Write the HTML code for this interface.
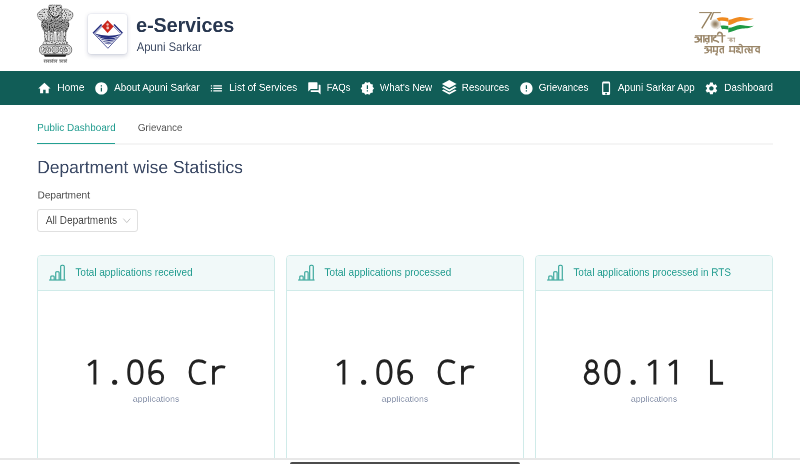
<!DOCTYPE html>
<html>
<head>
<meta charset="utf-8">
<style>
*{box-sizing:border-box;margin:0;padding:0}
html,body{width:800px;height:464px;overflow:hidden;background:#fff}
body{font-family:"Liberation Sans",sans-serif;position:relative;color:#333}
.t{position:absolute;left:0;top:0;white-space:nowrap;line-height:1.2;transform-origin:0 0;z-index:5;will-change:transform}
#title{font-size:40px;font-weight:bold;color:#283750;transform:translate(136.12px,12.79px) scale(0.4900,0.5107)}
#sub{font-size:24px;font-weight:normal;color:#3d4a63;transform:translate(136.78px,39.87px) scale(0.4679,0.5059)}
#n1{font-size:20px;font-weight:normal;color:#fff;transform:translate(57.21px,81.15px) scale(0.5102,0.5107)}
#n2{font-size:20px;font-weight:normal;color:#fff;transform:translate(114.12px,81.15px) scale(0.4962,0.5107)}
#n3{font-size:20px;font-weight:normal;color:#fff;transform:translate(229.18px,81.15px) scale(0.5016,0.5107)}
#n4{font-size:20px;font-weight:normal;color:#fff;transform:translate(326.72px,81.15px) scale(0.4728,0.5107)}
#n5{font-size:20px;font-weight:normal;color:#fff;transform:translate(379.87px,81.15px) scale(0.4925,0.5107)}
#n6{font-size:20px;font-weight:normal;color:#fff;transform:translate(461.68px,81.15px) scale(0.4970,0.5107)}
#n7{font-size:20px;font-weight:normal;color:#fff;transform:translate(538.73px,81.15px) scale(0.4904,0.5107)}
#n8{font-size:20px;font-weight:normal;color:#fff;transform:translate(617.87px,81.15px) scale(0.4936,0.5107)}
#n9{font-size:20px;font-weight:normal;color:#fff;transform:translate(724.18px,81.15px) scale(0.4979,0.5107)}
#tab1{font-size:20px;font-weight:normal;color:#239d90;transform:translate(37.18px,121.43px) scale(0.4971,0.5036)}
#tab2{font-size:20px;font-weight:normal;color:#555;transform:translate(137.88px,121.43px) scale(0.4882,0.5036)}
#h1{font-size:36px;font-weight:normal;color:#3b4965;transform:translate(37.15px,156.95px) scale(0.4849,0.4808)}
#lbl{font-size:20px;font-weight:normal;color:#4a4a4a;transform:translate(37.58px,189.00px) scale(0.5006,0.5000)}
#seltxt{font-size:22px;font-weight:normal;color:#4a4a4a;transform:translate(45.88px,213.53px) scale(0.4550,0.5133)}
#ct1{font-size:21px;font-weight:normal;color:#239d90;transform:translate(75.37px,265.16px) scale(0.4756,0.5321)}
#ct2{font-size:21px;font-weight:normal;color:#239d90;transform:translate(324.37px,265.16px) scale(0.4808,0.5321)}
#ct3{font-size:21px;font-weight:normal;color:#239d90;transform:translate(573.37px,265.16px) scale(0.4726,0.5321)}
#sm1{font-size:17px;font-weight:normal;color:#8c96ad;transform:translate(132.70px,394.44px) scale(0.5202,0.4849)}
#sm2{font-size:17px;font-weight:normal;color:#8c96ad;transform:translate(381.50px,394.44px) scale(0.5219,0.4849)}
#sm3{font-size:17px;font-weight:normal;color:#8c96ad;transform:translate(630.81px,394.44px) scale(0.5173,0.4849)}
#logobox{position:absolute;left:87.9px;top:14.3px;width:39.4px;height:39.9px;background:#fff;border-radius:3px;box-shadow:0 1.5px 4px rgba(60,70,110,.22),0 0 0 0.6px rgba(80,95,150,.09)}
#nav{position:absolute;left:0;top:70.5px;width:800px;height:34px;background:#115d57}
.nic{position:absolute;top:80.6px;width:14.8px;height:14.8px;fill:#fff;z-index:4}
#tabline{position:absolute;left:37px;top:143.1px;width:735.8px;height:1.7px;background:#f5f5f5}
#tabink{position:absolute;left:37px;top:142.8px;width:78px;height:1.6px;background:#23a092}
#sel{position:absolute;left:37.2px;top:208.9px;width:101.3px;height:23px;border:1px solid #e0e0e0;border-radius:3px;background:#fff}
.card{position:absolute;top:255px;width:238px;height:230px;border:1px solid #d0ebe9;border-radius:4px;background:#fff;overflow:hidden}
.chead{position:absolute;left:0;top:0;width:100%;height:35px;background:#f1f9f9;border-bottom:1px solid #d0ebe9}
.cicon{position:absolute;top:262.7px;width:18.7px;height:18.7px;z-index:4}
.big{position:absolute;top:353.5px;width:238px;margin-left:0.7px;text-align:center;font-family:"Liberation Mono",monospace;font-size:34.5px;line-height:44px;color:#222;white-space:pre;transform:scaleY(1.124);transform-origin:50% 31px;z-index:5}
#sbline{position:absolute;left:0;top:458px;width:800px;height:2px;background:#e8e8e8;z-index:8}
#sbwhite{position:absolute;left:0;top:460px;width:800px;height:4px;background:#fff;z-index:8}
#sbthumb{position:absolute;left:290px;top:461.9px;width:229.5px;height:4px;background:#4c4c4c;border-radius:2px 2px 0 0;z-index:9}
</style>
</head>
<body>
<svg id="emblem" style="position:absolute;left:30px;top:0;width:50px;height:70px" viewBox="30 0 50 70">
<defs>
<filter id="tx1" x="-5%" y="-5%" width="110%" height="110%" color-interpolation-filters="sRGB">
<feTurbulence type="fractalNoise" baseFrequency="0.950 0.800" numOctaves="1" seed="7" result="n"/>
<feColorMatrix in="n" type="matrix" values="0 0 0 0 0 0 0 0 0 0 0 0 0 0 0 3.500 0 0 0 -1.550" result="a"/>
<feFlood flood-color="#262626" result="f"/>
<feComposite in="f" in2="a" operator="in" result="sp"/>
<feComposite in="sp" in2="SourceGraphic" operator="in" result="s2"/>
<feMerge><feMergeNode in="SourceGraphic"/><feMergeNode in="s2"/></feMerge>
</filter>
<filter id="tx2" x="-5%" y="-5%" width="110%" height="110%" color-interpolation-filters="sRGB">
<feTurbulence type="fractalNoise" baseFrequency="0.900 0.900" numOctaves="1" seed="11" result="n"/>
<feColorMatrix in="n" type="matrix" values="0 0 0 0 0 0 0 0 0 0 0 0 0 0 0 3.500 0 0 0 -1.700" result="a"/>
<feFlood flood-color="#3a3a3a" result="f"/>
<feComposite in="f" in2="a" operator="in" result="sp"/>
<feComposite in="sp" in2="SourceGraphic" operator="in" result="s2"/>
<feMerge><feMergeNode in="SourceGraphic"/><feMergeNode in="s2"/></feMerge>
</filter>
</defs>
<!-- side lion heads -->
<g filter="url(#tx2)">
<path d="M49.200 10.200 C47 8.300 42.500 8.600 40.400 11 C37.600 12.200 36.600 15.200 38.200 17.300 C38.600 19.600 40.800 20.800 43 20.200 L49.200 22 Z" fill="#dedede" stroke="#5a5a5a" stroke-width="0.500"/>
<path d="M61.200 10.200 C63.400 8.300 67.900 8.600 70 11 C72.800 12.200 73.800 15.200 72.200 17.300 C71.800 19.600 69.600 20.800 67.400 20.200 L61.200 22 Z" fill="#dedede" stroke="#5a5a5a" stroke-width="0.500"/>
</g>
<!-- mane -->
<g filter="url(#tx1)">
<path d="M42 19.600 L68.400 19.600 L69.400 25 L67.800 29.500 L66 32.600 L62 31 L58.500 33 L55.200 31.400 L52 33 L48.500 31 L44.500 32.600 L42.600 29.500 L41 25 Z" fill="#9c9c9c"/>
</g>
<!-- center head -->
<g filter="url(#tx1)">
<path d="M49.600 5.200 L60.800 5.200 Q61.600 5.200 61.600 6.200 L61.600 16 Q61.600 20 55.200 20.400 Q48.800 20 48.800 16 L48.800 6.200 Q48.800 5.200 49.600 5.200 Z" fill="#d4d4d4" stroke="#555" stroke-width="0.500"/>
</g>
<path d="M54.300 7.600 h2.200 v0.900 h-0.600 v2 h-1 v-2 h-0.600 z" fill="#f4f4f4"/>
<path d="M51.300 14.800 Q55.300 19.600 59.400 14.800" fill="none" stroke="#1e1e1e" stroke-width="1.200"/>
<path d="M52.200 14.300 Q55.300 17.500 58.500 14.300" fill="none" stroke="#f2f2f2" stroke-width="0.900"/>
<!-- legs -->
<g fill="#e4e4e4" stroke="#4a4a4a" stroke-width="0.550" filter="url(#tx2)">
<path d="M44.600 31.500 L47.300 31 L47.600 41 L45 41 Z"/>
<path d="M50 32 L53.200 32 L52.800 41 L50.400 41 Z"/>
<path d="M57 32 L60.400 32 L60 41 L57.400 41 Z"/>
<path d="M63.200 31 L65.900 31.500 L65.500 41 L62.900 41 Z"/>
</g>
<path d="M48.600 32 L49.200 40 M54 33 L54.400 40 M56.200 33 L55.900 40 M61.600 32 L61.300 40" stroke="#666" stroke-width="0.500"/>
<!-- paws -->
<g filter="url(#tx2)"><path d="M42.800 44.800 Q43 41 46 40.800 L64.600 40.800 Q67.800 41 68 44.800 Z" fill="#e0e0e0" stroke="#555" stroke-width="0.400"/></g>
<!-- abacus -->
<rect x="39.500" y="44.800" width="32.200" height="10" rx="4.600" fill="#ededed" stroke="#3f3f3f" stroke-width="0.700"/>
<g filter="url(#tx2)"><rect x="41.200" y="46.200" width="28.800" height="7.200" rx="3.300" fill="#f0f0f0" stroke="#7a7a7a" stroke-width="0.450"/></g>
<path d="M43.600 51.600 L44 48.600 Q47 47.400 50.400 48.400 L50.600 51.600 M46 49 L46 51.600 M48.400 49 L48.400 51.600 M60.200 51.600 L60.400 48.400 Q63.600 47.400 66.800 48.600 L67.200 51.600 M62.600 49 L62.600 51.600 M64.800 49 L64.800 51.600" fill="none" stroke="#4a4a4a" stroke-width="0.700"/>
<circle cx="55.400" cy="49.500" r="3.500" fill="#f4f4f4" stroke="#444" stroke-width="0.700"/>
<circle cx="55.400" cy="49.500" r="2" fill="#cfcfcf" stroke="#666" stroke-width="0.500"/>
<circle cx="55.400" cy="49.500" r="0.700" fill="#f8f8f8" stroke="#555" stroke-width="0.300"/>
<!-- base -->
<path d="M43.800 54.600 L66.400 54.600 L65.400 56.700 L44.800 56.700 Z" fill="#222"/>
<!-- motto -->
<g stroke="#565656" fill="none" stroke-width="0.700">
<path d="M43.600 60 H57.600 M59 60 H67.200"/>
<path d="M44.800 60 V62.800 M46.600 60 V62.800 M48.600 60 V62.800 M50.300 60 V62.800 M52.400 60 V62.800 M54.200 60 V62.800 M56.400 60 V62.800 M60.200 60 V62.800 M62.200 60 V62.800 M64.300 60 V62.800 M66.200 60 V62.800" stroke-width="0.650"/>
<path d="M43.800 61.500 h1 M47.200 61.500 h1.200 M51 61.600 h1.200 M55 61.400 h1.200 M60.800 61.500 h1.200 M64.800 61.500 h1.200" stroke-width="0.650"/>
<path d="M52 59.900 L53.400 58.900 M65.800 59.900 L67 58.900" stroke-width="0.450"/>
</g>
</svg>

<div id="logobox"></div>
<svg id="uklogo" style="position:absolute;left:88px;top:14px;width:40px;height:40px;z-index:2" viewBox="88 14 40 40">
<g fill="none" stroke="#232c7d" stroke-linecap="butt">
<path d="M93 32.700 L107.900 48.300 L122.500 32.700" stroke-width="0.750"/>
<path d="M93.300 33 L101.600 24.600" stroke-width="1.400"/>
<path d="M95 33.300 L102.300 26.100" stroke-width="0.600"/>
<path d="M122.300 33 L114 24.600" stroke-width="1.400"/>
<path d="M120.500 33.300 L113.200 26.100" stroke-width="0.600"/>
</g>
<g fill="#232c7d">
<path d="M93.600 33.300 Q108 42.400 121.600 33.900 Q108 37.800 93.600 33.300 Z"/>
<path d="M95.800 35.600 Q109 43 119.400 36.400 Q109 40 95.800 35.600 Z"/>
<path d="M98 37.900 Q109.500 44 117.200 38.500 Q109.500 41.600 98 37.900 Z"/>
<path d="M100.400 40.200 Q109.500 45 115 40.600 Q109.500 43.200 100.400 40.200 Z"/>
<path d="M103 42.500 Q109 45.800 113 42.600 Q109 44.500 103 42.500 Z"/>
</g>
<path d="M107.600 20.300 L113.600 26.600 L107.600 32.900 L101.700 26.600 Z" fill="#c9261c"/>
<g fill="#f0bdb7"><circle cx="107.600" cy="24.500" r="1.200"/><circle cx="107.700" cy="28" r="1.400"/></g>
</svg>

<svg id="azadi" style="position:absolute;left:690px;top:4px;width:80px;height:58px" viewBox="690 4 80 58">
<defs>
<radialGradient id="chk" cx="0.500" cy="0.500" r="0.500"><stop offset="0" stop-color="#8d7759"/><stop offset="0.350" stop-color="#a89880"/><stop offset="0.700" stop-color="#d6cec2"/><stop offset="0.880" stop-color="#f1eeea"/><stop offset="1" stop-color="#ffffff"/></radialGradient>
</defs>
<!-- 75 -->
<g fill="none" stroke="#96815f" stroke-linecap="butt">
<path d="M699.200 12.600 H712" stroke-width="1"/>
<path d="M711.300 12.600 L701.800 28.400" stroke-width="1.400"/>
<path d="M712.800 12.600 H720.800" stroke-width="1"/>
<path d="M713.400 12.600 L710.500 19.800" stroke-width="1.300"/>
</g>
<circle cx="715.200" cy="24" r="5.400" fill="url(#chk)"/>
<path d="M716.600 18.900 A5.300 5.300 0 0 1 716.800 29.100" fill="none" stroke="#cfc8bd" stroke-width="0.700"/>
<!-- flag -->
<g fill="#f08a1f">
<path d="M716.800 18.300 C720 17 724 17 728.300 18.100 L728.300 21.700 C724 20.600 721 20.600 718.800 21.300 Z"/>
<path d="M728.300 19.600 C732 20 736 17 740 17.100 C745 17.200 749 19.400 753.800 18.200 C749 21.200 745 20.400 741 20.900 C736 21.500 732 24.600 728.300 25.300 Z"/>
</g>
<g fill="#1f9a45">
<path d="M720.400 25.800 C723 25.200 725.500 25.300 728.300 26 L728.300 29.500 C725.500 28.800 723.500 28.800 722 29.200 Z"/>
<path d="M728.300 27.800 C732 28 736 25 740 24.900 C745 25 749 27 753.800 25.800 C749 29 745 28.200 741 28.700 C736 29.300 732 31.900 728.300 32.500 Z"/>
</g>
<!-- text -->
<g fill="none" stroke="#9a8669" stroke-width="1.350" stroke-linecap="round" stroke-linejoin="round">
<path d="M694.900 35.800 H725.500" stroke-linecap="butt" stroke-width="1.150"/>
<path stroke-width="1.550" d="M695.100 37.400 C697.600 36.300 699.400 37.700 697.400 39.100 C700 39.200 700.200 42.400 695.100 41.900 M698.600 39.200 H701.200 M701.200 35.800 V42 M703.900 35.800 V42"/>
<path stroke-width="1.550" d="M708.800 35.800 V42 M708.800 38.600 H706.500 C704.700 38.600 704.800 41.300 707 41.600 M711.900 35.800 V42"/>
<circle cx="707.200" cy="43.300" r="0.250"/>
<path stroke-width="1.550" d="M715.600 35.800 V36.900 C712.600 37.300 712.600 41 715.400 40.700 C716.900 40.500 717.500 41.500 718.400 42.100 M722.300 42 V35.800 C722.300 32 718.600 31.300 717.600 34.200"/>
<g stroke-width="0.800" stroke="#a8977f">
<path d="M727.400 38.200 H735.200" stroke-linecap="butt"/>
<path d="M731 38.200 V41.800 M731 39.800 C729.200 38.800 728 41 731 40.900 M731 39.800 C732.400 39 733 40.400 732.200 41.300 M734.400 38.200 V41.800"/>
</g>
<g transform="translate(0 0.250)">
<path d="M704.500 46.300 H724.400 M729.200 46.300 H760.300" stroke-linecap="butt" stroke-width="1.150"/>
<path d="M704.800 48.100 C707.300 46.900 708.800 48.500 706.800 49.800 C709.300 49.900 709.300 53 704.800 52.600 M708.400 49.900 H711.200 M711.200 46.300 V52.600"/>
<path d="M713.700 46.300 V51.200 M713 50.900 H717.300 M717.300 46.300 V52.600 M716.600 53.200 C715.400 53.900 715.800 54.800 717.200 54.600"/>
<path d="M723.300 46.300 V52.600 M723.300 48.600 C719.800 47.600 718.800 50.500 721.300 52.500"/>
<path d="M730.100 46.300 V51.200 M729.400 50.900 H734.400 M734.400 46.300 V52.600"/>
<path d="M736.600 47.900 C739.600 47.300 740.200 49.600 737.600 49.900 C735.700 50.300 736.300 52.100 738.200 51.600 C739.700 51.300 740.200 52.200 740.600 52.800 M742.200 46.300 V52.600 M742.200 46.300 C742 44.500 740.500 43.900 739.300 44.400"/>
<path d="M747.600 48.800 C745 47.800 744.200 50.500 746.200 52.400 M752 46.300 V52.600 M748.600 49.800 H752 M748.400 47.600 C750 47.800 749.800 50 748.400 50 C748.400 51.400 749.200 52.300 750 52.500"/>
<path d="M759.200 46.300 V52.600 M759.200 47.800 C755.300 46.800 753.900 51.800 759.200 51.400"/>
</g>
</g>
</svg>

<div id="nav"></div>
<svg class="nic" style="left:37px" viewBox="0 0 24 24"><path d="M10 20v-6h4v6h5v-8h3L12 3 2 12h3v8z"/></svg>
<svg class="nic" style="left:94.1px" viewBox="0 0 24 24"><path d="M12 2C6.480 2 2 6.480 2 12s4.480 10 10 10 10-4.480 10-10S17.520 2 12 2zm1 15h-2v-6h2v6zm0-8h-2V7h2v2z"/></svg>
<svg class="nic" style="left:209px" viewBox="0 0 24 24"><path d="M3 13h2v-2H3v2zm0 4h2v-2H3v2zm0-8h2V7H3v2zm4 4h14v-2H7v2zm0 4h14v-2H7v2zM7 7v2h14V7H7z"/></svg>
<svg class="nic" style="left:306.85px" viewBox="0 0 24 24"><path d="M21 6h-2v9H6v2c0 .55.450 1 1 1h11l4 4V7c0-.55-.45-1-1-1zm-4 6V3c0-.55-.45-1-1-1H3c-.55 0-1 .45-1 1v14l4-4h10c.55 0 1-.45 1-1z"/></svg>
<svg class="nic" style="left:359.6px" viewBox="0 0 24 24"><path d="M23 12l-2.440-2.780.340-3.680-3.610-.820-1.890-3.180L12 3 8.600 1.540 6.710 4.720l-3.610.810.340 3.680L1 12l2.440 2.780-.340 3.690 3.610.820 1.890 3.180L12 21l3.400 1.460 1.890-3.180 3.610-.820-.340-3.680L23 12zm-10 5h-2v-2h2v2zm0-4h-2V7h2v6z"/></svg>
<svg style="position:absolute;left:440px;top:78px;width:20px;height:20px;z-index:4" viewBox="440 78 20 20"><g fill="#fff"><path d="M449.250 80 L456.600 84 L449.250 88.100 L441.900 84 Z"/><path d="M441.900 87.300 L443.700 86.300 L449.250 89.400 L454.800 86.300 L456.600 87.300 L449.250 91.400 Z"/><path d="M441.900 90.500 L443.700 89.500 L449.250 92.600 L454.800 89.500 L456.600 90.500 L449.250 94.600 Z"/></g></svg>
<svg class="nic" style="left:518.6px" viewBox="0 0 24 24"><path d="M12 2C6.480 2 2 6.480 2 12s4.480 10 10 10 10-4.480 10-10S17.520 2 12 2zm1 15h-2v-2h2v2zm0-4h-2V7h2v6z"/></svg>
<svg class="nic" style="left:598.5px" viewBox="0 0 24 24"><path d="M15.500 1h-8C6.120 1 5 2.120 5 3.500v17C5 21.880 6.120 23 7.500 23h8c1.380 0 2.500-1.120 2.500-2.500v-17C18 2.120 16.880 1 15.500 1zm-4 21c-.83 0-1.500-.67-1.500-1.500s.67-1.500 1.500-1.500 1.500.67 1.500 1.500-.67 1.500-1.500 1.500zm4.500-4H7V4h9v14z"/></svg>
<svg class="nic" style="left:704.1px" viewBox="0 0 24 24"><path d="M19.140 12.940c.040-.3.060-.61.060-.94 0-.32-.020-.64-.070-.94l2.030-1.580c.18-.14.230-.41.120-.61l-1.920-3.320c-.12-.22-.37-.29-.59-.22l-2.390.96c-.5-.38-1.030-.7-1.620-.94l-.36-2.540c-.04-.24-.24-.41-.48-.41h-3.840c-.24 0-.43.170-.47.410l-.36 2.540c-.59.240-1.130.570-1.620.940l-2.390-.96c-.22-.08-.47 0-.59.220L2.740 8.870c-.12.210-.08.470.12.610l2.030 1.580c-.05.300-.09.630-.09.940s.02.640.07.940l-2.030 1.580c-.18.140-.23.410-.12.610l1.920 3.320c.12.220.37.290.59.220l2.390-.96c.5.380 1.030.7 1.620.94l.36 2.540c.05.240.24.410.48.410h3.840c.24 0 .44-.17.470-.41l.36-2.540c.59-.24 1.130-.56 1.620-.94l2.390.96c.22.080.47 0 .59-.22l1.920-3.320c.12-.22.070-.47-.12-.61l-2.010-1.580zM12 15.600c-1.980 0-3.600-1.620-3.600-3.600s1.620-3.600 3.600-3.600 3.600 1.620 3.600 3.600-1.620 3.600-3.600 3.600z"/></svg>

<div id="tabline"></div>
<div id="tabink"></div>
<div id="sel"></div>
<svg style="position:absolute;left:121.5px;top:216px;width:10px;height:10px;z-index:4" viewBox="0 0 10 10"><path d="M1.3 2.6 L4.75 6.6 L8.2 2.6" fill="none" stroke="#bdbdbd" stroke-width="0.9"/></svg>
<div class="card" style="left:37px"><div class="chead"></div></div>
<div class="card" style="left:286px"><div class="chead"></div></div>
<div class="card" style="left:535px"><div class="chead"></div></div>
<svg class="cicon" style="left:48.4px" viewBox="0 0 20 20"><g fill="none" stroke="#239d90" stroke-width="1.1"><path d="M1.200 18.200 H18.800"/><path d="M3 18 V14.800 a1 1 0 0 1 1-1 h1.600 a1 1 0 0 1 1 1 V18"/><path d="M8.300 18 V10.300 a1 1 0 0 1 1-1 h1.600 a1 1 0 0 1 1 1 V18"/><path d="M13.600 18 V3.800 a1.300 1.300 0 0 1 1.300-1.300 h1.200 a1.300 1.300 0 0 1 1.300 1.300 V18"/></g></svg>
<svg class="cicon" style="left:297.4px" viewBox="0 0 20 20"><g fill="none" stroke="#239d90" stroke-width="1.1"><path d="M1.200 18.200 H18.800"/><path d="M3 18 V14.800 a1 1 0 0 1 1-1 h1.600 a1 1 0 0 1 1 1 V18"/><path d="M8.300 18 V10.300 a1 1 0 0 1 1-1 h1.600 a1 1 0 0 1 1 1 V18"/><path d="M13.600 18 V3.800 a1.300 1.300 0 0 1 1.300-1.300 h1.200 a1.300 1.300 0 0 1 1.300 1.300 V18"/></g></svg>
<svg class="cicon" style="left:546.4px" viewBox="0 0 20 20"><g fill="none" stroke="#239d90" stroke-width="1.1"><path d="M1.200 18.200 H18.800"/><path d="M3 18 V14.800 a1 1 0 0 1 1-1 h1.600 a1 1 0 0 1 1 1 V18"/><path d="M8.300 18 V10.300 a1 1 0 0 1 1-1 h1.600 a1 1 0 0 1 1 1 V18"/><path d="M13.600 18 V3.800 a1.300 1.300 0 0 1 1.300-1.300 h1.200 a1.300 1.300 0 0 1 1.300 1.300 V18"/></g></svg>

<svg id="bigsvg" style="position:absolute;left:0;top:350px;width:800px;height:45px;z-index:5" viewBox="0 350 800 45"><g fill="none" stroke="#222" stroke-width="2.850">
<g transform="translate(93.90 384.600)"><path d="M2.450 0 L2.450 -24.900 L-0.200 -24.900 L-6.400 -20.300 L-4.900 -18.100 L-0.450 -21.400 L-0.450 0 Z" fill="#222" stroke="none"/></g>
<g transform="translate(114.65 384.600)"><circle cx="0" cy="-2.300" r="2.550" fill="#222" stroke="none"/></g>
<g transform="translate(135.40 384.600)"><path d="M0 -23.850 C4.600 -23.850 6.700 -19.500 6.700 -12.450 C6.700 -5.400 4.600 -1.050 0 -1.050 C-4.600 -1.050 -6.700 -5.400 -6.700 -12.450 C-6.700 -19.500 -4.600 -23.850 0 -23.850 Z"/></g>
<g transform="translate(156.15 384.600)"><path d="M5.600 -23.400 C4.200 -23.800 3 -23.900 1.800 -23.900 C-3.500 -23.900 -6.500 -19.500 -6.500 -11.500 C-6.500 -4.500 -4 -1 0.300 -1 C4 -1 6.500 -3.400 6.500 -7.100 C6.500 -10.700 4.200 -13.100 0.600 -13.100 C-2.500 -13.100 -5.200 -11.500 -6.400 -8.600"/></g>
<g transform="translate(197.65 384.600)"><path d="M8.200 -21.700 C5.700 -23.250 3.300 -23.850 1 -23.850 C-4.500 -23.850 -7.600 -19.300 -7.600 -12.450 C-7.600 -5.600 -4.500 -1.050 1 -1.050 C3.400 -1.050 5.800 -1.500 8.200 -2.600"/></g>
<g transform="translate(218.40 384.600)"><path d="M-4.900 -18.800 L-4.900 0"/><path d="M-4.900 -12.300 C-3.200 -16 -0.200 -17.900 2.900 -17.900 C4.200 -17.900 5.500 -17.750 6.800 -17.350"/></g>
<g transform="translate(342.90 384.600)"><path d="M2.450 0 L2.450 -24.900 L-0.200 -24.900 L-6.400 -20.300 L-4.900 -18.100 L-0.450 -21.400 L-0.450 0 Z" fill="#222" stroke="none"/></g>
<g transform="translate(363.65 384.600)"><circle cx="0" cy="-2.300" r="2.550" fill="#222" stroke="none"/></g>
<g transform="translate(384.40 384.600)"><path d="M0 -23.850 C4.600 -23.850 6.700 -19.500 6.700 -12.450 C6.700 -5.400 4.600 -1.050 0 -1.050 C-4.600 -1.050 -6.700 -5.400 -6.700 -12.450 C-6.700 -19.500 -4.600 -23.850 0 -23.850 Z"/></g>
<g transform="translate(405.15 384.600)"><path d="M5.600 -23.400 C4.200 -23.800 3 -23.900 1.800 -23.900 C-3.500 -23.900 -6.500 -19.500 -6.500 -11.500 C-6.500 -4.500 -4 -1 0.300 -1 C4 -1 6.500 -3.400 6.500 -7.100 C6.500 -10.700 4.200 -13.100 0.600 -13.100 C-2.500 -13.100 -5.200 -11.500 -6.400 -8.600"/></g>
<g transform="translate(446.65 384.600)"><path d="M8.200 -21.700 C5.700 -23.250 3.300 -23.850 1 -23.850 C-4.500 -23.850 -7.600 -19.300 -7.600 -12.450 C-7.600 -5.600 -4.500 -1.050 1 -1.050 C3.400 -1.050 5.800 -1.500 8.200 -2.600"/></g>
<g transform="translate(467.40 384.600)"><path d="M-4.900 -18.800 L-4.900 0"/><path d="M-4.900 -12.300 C-3.200 -16 -0.200 -17.900 2.900 -17.900 C4.200 -17.900 5.500 -17.750 6.800 -17.350"/></g>
<g transform="translate(591.65 384.600)"><ellipse cx="0" cy="-18.750" rx="4.850" ry="5.150"/><ellipse cx="0" cy="-7.300" rx="6.450" ry="6.300"/></g>
<g transform="translate(612.40 384.600)"><path d="M0 -23.850 C4.600 -23.850 6.700 -19.500 6.700 -12.450 C6.700 -5.400 4.600 -1.050 0 -1.050 C-4.600 -1.050 -6.700 -5.400 -6.700 -12.450 C-6.700 -19.500 -4.600 -23.850 0 -23.850 Z"/></g>
<g transform="translate(633.15 384.600)"><circle cx="0" cy="-2.300" r="2.550" fill="#222" stroke="none"/></g>
<g transform="translate(653.90 384.600)"><path d="M2.450 0 L2.450 -24.900 L-0.200 -24.900 L-6.400 -20.300 L-4.900 -18.100 L-0.450 -21.400 L-0.450 0 Z" fill="#222" stroke="none"/></g>
<g transform="translate(674.65 384.600)"><path d="M2.450 0 L2.450 -24.900 L-0.200 -24.900 L-6.400 -20.300 L-4.900 -18.100 L-0.450 -21.400 L-0.450 0 Z" fill="#222" stroke="none"/></g>
<g transform="translate(716.15 384.600)"><path d="M-4.750 -24.900 L-4.750 -1.400 L6.950 -1.400"/></g>
</g></svg>
<div class="t" id="title">e-Services</div>
<div class="t" id="sub">Apuni Sarkar</div>
<div class="t" id="n1">Home</div>
<div class="t" id="n2">About Apuni Sarkar</div>
<div class="t" id="n3">List of Services</div>
<div class="t" id="n4">FAQs</div>
<div class="t" id="n5">What's New</div>
<div class="t" id="n6">Resources</div>
<div class="t" id="n7">Grievances</div>
<div class="t" id="n8">Apuni Sarkar App</div>
<div class="t" id="n9">Dashboard</div>
<div class="t" id="tab1">Public Dashboard</div>
<div class="t" id="tab2">Grievance</div>
<div class="t" id="h1">Department wise Statistics</div>
<div class="t" id="lbl">Department</div>
<div class="t" id="seltxt">All Departments</div>
<div class="t" id="ct1">Total applications received</div>
<div class="t" id="ct2">Total applications processed</div>
<div class="t" id="ct3">Total applications processed in RTS</div>
<div class="t" id="sm1">applications</div>
<div class="t" id="sm2">applications</div>
<div class="t" id="sm3">applications</div>
<div id="sbline"></div>
<div id="sbwhite"></div>
<div id="sbthumb"></div>
</body>
</html>
